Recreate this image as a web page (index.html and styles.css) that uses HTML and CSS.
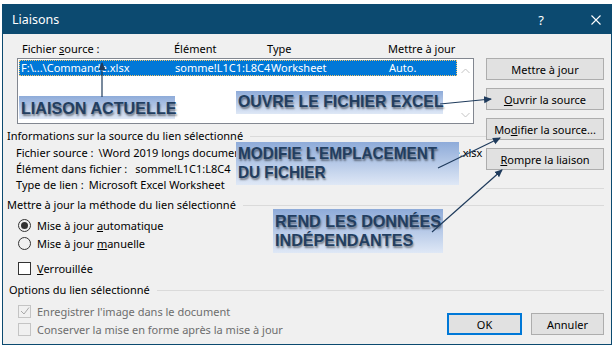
FILE: index.html
```html
<!DOCTYPE html>
<html lang="fr">
<head>
    <meta charset="UTF-8">
    <title>Liaisons</title>
    <link rel="stylesheet" href="styles.css">
</head>
<body>
<div class="screen">

    <!-- Dialog window -->
    <div class="dialog">
        <div class="titlebar">
            <span class="title">Liaisons</span>
            <span class="help">?</span>
            <svg class="close" width="10" height="10" viewBox="0 0 10 10">
                <path d="M0.5 0.5 L9.5 9.5 M9.5 0.5 L0.5 9.5" stroke="#fff" stroke-width="1.1" fill="none"/>
            </svg>
        </div>

        <div class="content">
            <div class="top">
                <div class="main">
                    <div class="list-head">
                        <span class="c-file">Fichier <u>s</u>ource :</span>
                        <span class="c-item">Élément</span>
                        <span class="c-type">Type</span>
                        <span class="c-upd">Mettre à jour</span>
                    </div>
                    <div class="listbox">
                        <div class="rows">
                            <div class="row selected">
                                <span class="c-file">F:\...\Commande.xlsx</span>
                                <span class="c-item">somme!L1C1:L8C4</span>
                                <span class="c-type">Worksheet</span>
                                <span class="c-upd">Auto.</span>
                            </div>
                        </div>
                        <div class="scrollbar">
                            <svg width="9" height="6" viewBox="0 0 9 6"><path d="M0.5 5 L4.5 1 L8.5 5" stroke="#c4c4c4" fill="none"/></svg>
                            <svg width="9" height="6" viewBox="0 0 9 6"><path d="M0.5 1 L4.5 5 L8.5 1" stroke="#c4c4c4" fill="none"/></svg>
                        </div>
                    </div>

                    <div class="group-title first">Informations sur la source du lien sélectionné</div>
                    <div class="info">
                        <div class="info-row">
                            <span class="lbl">Fichier source :</span>
                            <span class="path"><span class="path-start">\Word 2019 longs documents\Exemples\Chapitre 14</span><span>\Commande.xlsx</span></span>
                        </div>
                        <div class="info-row"><span class="lbl">Élément dans fichier :</span><span class="val wide">somme!L1C1:L8C4</span></div>
                        <div class="info-row"><span class="lbl">Type de lien :</span><span class="val">Microsoft Excel Worksheet</span></div>
                    </div>
                </div>

                <div class="side">
                    <button class="btn">Mettre à <u>j</u>our</button>
                    <button class="btn"><u>O</u>uvrir la source</button>
                    <button class="btn">Mo<u>d</u>ifier la source...</button>
                    <button class="btn"><u>R</u>ompre la liaison</button>
                    <div class="side-line"></div>
                </div>
            </div>

            <div class="group-title method">Mettre à jour la méthode du lien sélectionné</div>
            <div class="choices">
                <label class="choice"><span class="radio on"></span><span>Mise à jour <u>a</u>utomatique</span></label>
                <label class="choice"><span class="radio"></span><span>Mise à jour <u>m</u>anuelle</span></label>
                <label class="choice lock"><span class="check"></span><span><u>V</u>errouillée</span></label>
            </div>

            <div class="group-title options-title">Options du lien sélectionné</div>
            <div class="bottom">
                <div class="options">
                    <label class="choice off">
                        <span class="check dim">
                            <svg width="10" height="10" viewBox="0 0 10 10"><path d="M1 5 L4 8 L9 1.5" stroke="#a8a8a8" stroke-width="1" fill="none"/></svg>
                        </span>
                        <span>Enregistrer l'image dans le document</span>
                    </label>
                    <label class="choice off"><span class="check dim"></span><span>Conserver la mise en forme après la mise à jour</span></label>
                </div>
                <div class="actions">
                    <button class="btn ok">OK</button>
                    <button class="btn cancel">Annuler</button>
                </div>
            </div>
        </div>
    </div>

    <!-- Callouts drawn over the dialog -->
    <div class="note n-liaison"><span>LIAISON ACTUELLE</span></div>
    <div class="note n-ouvre"><span>OUVRE LE FICHIER EXCEL</span></div>
    <div class="note n-modifie"><span>MODIFIE L'EMPLACEMENT<br>DU FICHIER</span></div>
    <div class="note n-rend"><span>REND LES DONNÉES<br>INDÉPENDANTES</span></div>

    <svg class="arrows" width="614" height="348" viewBox="0 0 614 348">
        <defs>
            <marker id="head" markerWidth="8" markerHeight="8" refX="7" refY="4" orient="auto" markerUnits="userSpaceOnUse">
                <path d="M0 0.5 L8 4 L0 7.5 Z" fill="#1f3b5c"/>
            </marker>
        </defs>
        <g stroke="#1f3b5c" stroke-width="1.2" fill="none">
            <line x1="102" y1="97" x2="102" y2="63" marker-end="url(#head)"/>
            <line x1="440" y1="104" x2="491" y2="99" marker-end="url(#head)"/>
            <line x1="438" y1="168" x2="500" y2="138" marker-end="url(#head)"/>
            <line x1="432" y1="232" x2="502" y2="170" marker-end="url(#head)"/>
        </g>
    </svg>
</div>
</body>
</html>
```

FILE: styles.css
```css
/* Page and window frame */
body {
    margin: 0;
    background-color: #fff;
    font-family: "Noto Sans", sans-serif;
    font-size: 11px;
    color: #000;
}

.screen {
    position: relative;
    width: 614px;
    height: 348px;
    padding-top: 4px;
    box-sizing: border-box;
    overflow: hidden;
}

.dialog {
    margin-left: 2px;
    width: 610px;
    height: 341px;
    border: 1px solid #0c4a70;
    box-sizing: border-box;
    background-color: #f0f0f0;
}

/* Title bar */
.titlebar {
    height: 29px;
    background-color: #0c4a70;
    color: #fff;
    display: flex;
    align-items: center;
    padding-left: 9px;
}

.title {
    font-size: 12.5px;
}

.help {
    margin-left: auto;
    font-size: 13px;
}

.close {
    margin-left: 47px;
    margin-right: 10px;
}

/* Dialog content */
.content {
    padding: 7px 7px 0 4px;
}

.top {
    display: flex;
}

.main {
    flex: 1;
}

.side {
    width: 118px;
    padding-top: 17px;
    display: flex;
    flex-direction: column;
    gap: 8px;
}

.side-line {
    height: 1px;
    background-color: #dadada;
    margin-top: 10px;
}

/* List of links */
.list-head, .row {
    display: flex;
    white-space: nowrap;
    line-height: 16px;
}

.list-head {
    padding-left: 15px;
    margin-bottom: 1px;
}

.list-head .c-file { width: 152px; }
.list-head .c-item { width: 93px; }
.list-head .c-type { width: 121px; }

.listbox {
    margin-left: 10px;
    width: 457px;
    height: 66px;
    border: 1px solid #828790;
    box-sizing: border-box;
    background-color: #fff;
    display: flex;
}

.rows {
    flex: 1;
    padding: 1px 0 0 1px;
}

.row.selected {
    background-color: #0078d7;
    color: #fff;
    border: 1px dotted #f2c46b;
    height: 16px;
    box-sizing: border-box;
    line-height: 14px;
}

.row .c-file { width: 154px; padding-left: 1px; }
.row .c-item { width: 96px; }
.row .c-type { width: 118px; }

.scrollbar {
    width: 16px;
    display: flex;
    flex-direction: column;
    justify-content: space-between;
    align-items: center;
    padding: 9px 0 5px;
}

/* Group titles with their rule */
.group-title {
    display: flex;
    align-items: center;
    gap: 7px;
    line-height: 16px;
}

.group-title::after {
    content: "";
    flex: 1;
    height: 1px;
    background-color: #dadada;
}

.group-title.first { margin-top: 4px; }
.group-title.method { margin-top: 4px; }
.group-title.options-title { margin-top: 5px; padding-left: 2px; }

.info {
    padding-left: 9px;
    margin-top: 1px;
}

.info-row {
    display: flex;
    line-height: 16px;
    white-space: nowrap;
}

.lbl {
    margin-right: 5px;
}

.val.wide {
    margin-left: 3px;
}

/* long path: the middle part is cut off */
.path {
    display: flex;
    width: 384px;
}

.path-start {
    flex: 1;
    overflow: hidden;
}

/* Radio buttons and check boxes */
.choices {
    padding-left: 11px;
    margin-top: 3px;
}

.choice {
    display: flex;
    align-items: center;
    gap: 6px;
    height: 18px;
}

.choice.lock {
    margin-top: 7px;
}

.radio {
    width: 11px;
    height: 11px;
    border: 1px solid #333;
    border-radius: 50%;
    display: flex;
    align-items: center;
    justify-content: center;
}

.radio.on::after {
    content: "";
    width: 7px;
    height: 7px;
    border-radius: 50%;
    background-color: #333;
}

.check {
    width: 11px;
    height: 11px;
    border: 1px solid #333;
    background-color: #fff;
    display: flex;
    align-items: center;
    justify-content: center;
}

.check.dim {
    border-color: #c4c4c4;
    background-color: transparent;
}

.bottom {
    display: flex;
    justify-content: space-between;
    padding-left: 11px;
    margin-top: 4px;
}

.choice.off {
    color: #6d6d6d;
}

.actions {
    display: flex;
    gap: 9px;
    align-items: flex-start;
    padding-top: 11px;
}

/* Buttons */
.btn {
    height: 22px;
    padding: 0;
    font-family: "Noto Sans", sans-serif;
    font-size: 11px;
    color: #000;
    background-color: #e1e1e1;
    border: 1px solid #adadad;
}

.btn.ok {
    width: 75px;
    border: 2px solid #0078d7;
}

.btn.cancel {
    width: 73px;
}

/* Callouts */
.note {
    position: absolute;
    box-sizing: border-box;
    padding-left: 2px;
    background: linear-gradient(#8eabd9, #dfe8f6);
    color: #223e60;
    font-family: "Liberation Sans", sans-serif;
    font-weight: bold;
    font-size: 17px;
    line-height: 19px;
    white-space: nowrap;
    text-shadow: 1px 2px 2px rgba(0, 0, 0, 0.45);
}

.note span {
    display: inline-block;
    transform-origin: left top;
}

.n-liaison { left: 19px; top: 96px; width: 156px; height: 23px; padding-top: 3px; }
.n-ouvre { left: 236px; top: 91px; width: 207px; height: 23px; padding-top: 1px; }
.n-modifie { left: 236px; top: 142px; width: 223px; height: 43px; padding-top: 2px; }
.n-rend { left: 273px; top: 209px; width: 170px; height: 44px; padding-top: 3px; }

.n-liaison span { transform: scaleX(0.95); }
.n-ouvre span { transform: scaleX(0.93); }
.n-modifie span { transform: scaleX(0.9); }
.n-rend span { transform: scaleX(0.95); }

.arrows {
    position: absolute;
    left: 0;
    top: 0;
}
```
